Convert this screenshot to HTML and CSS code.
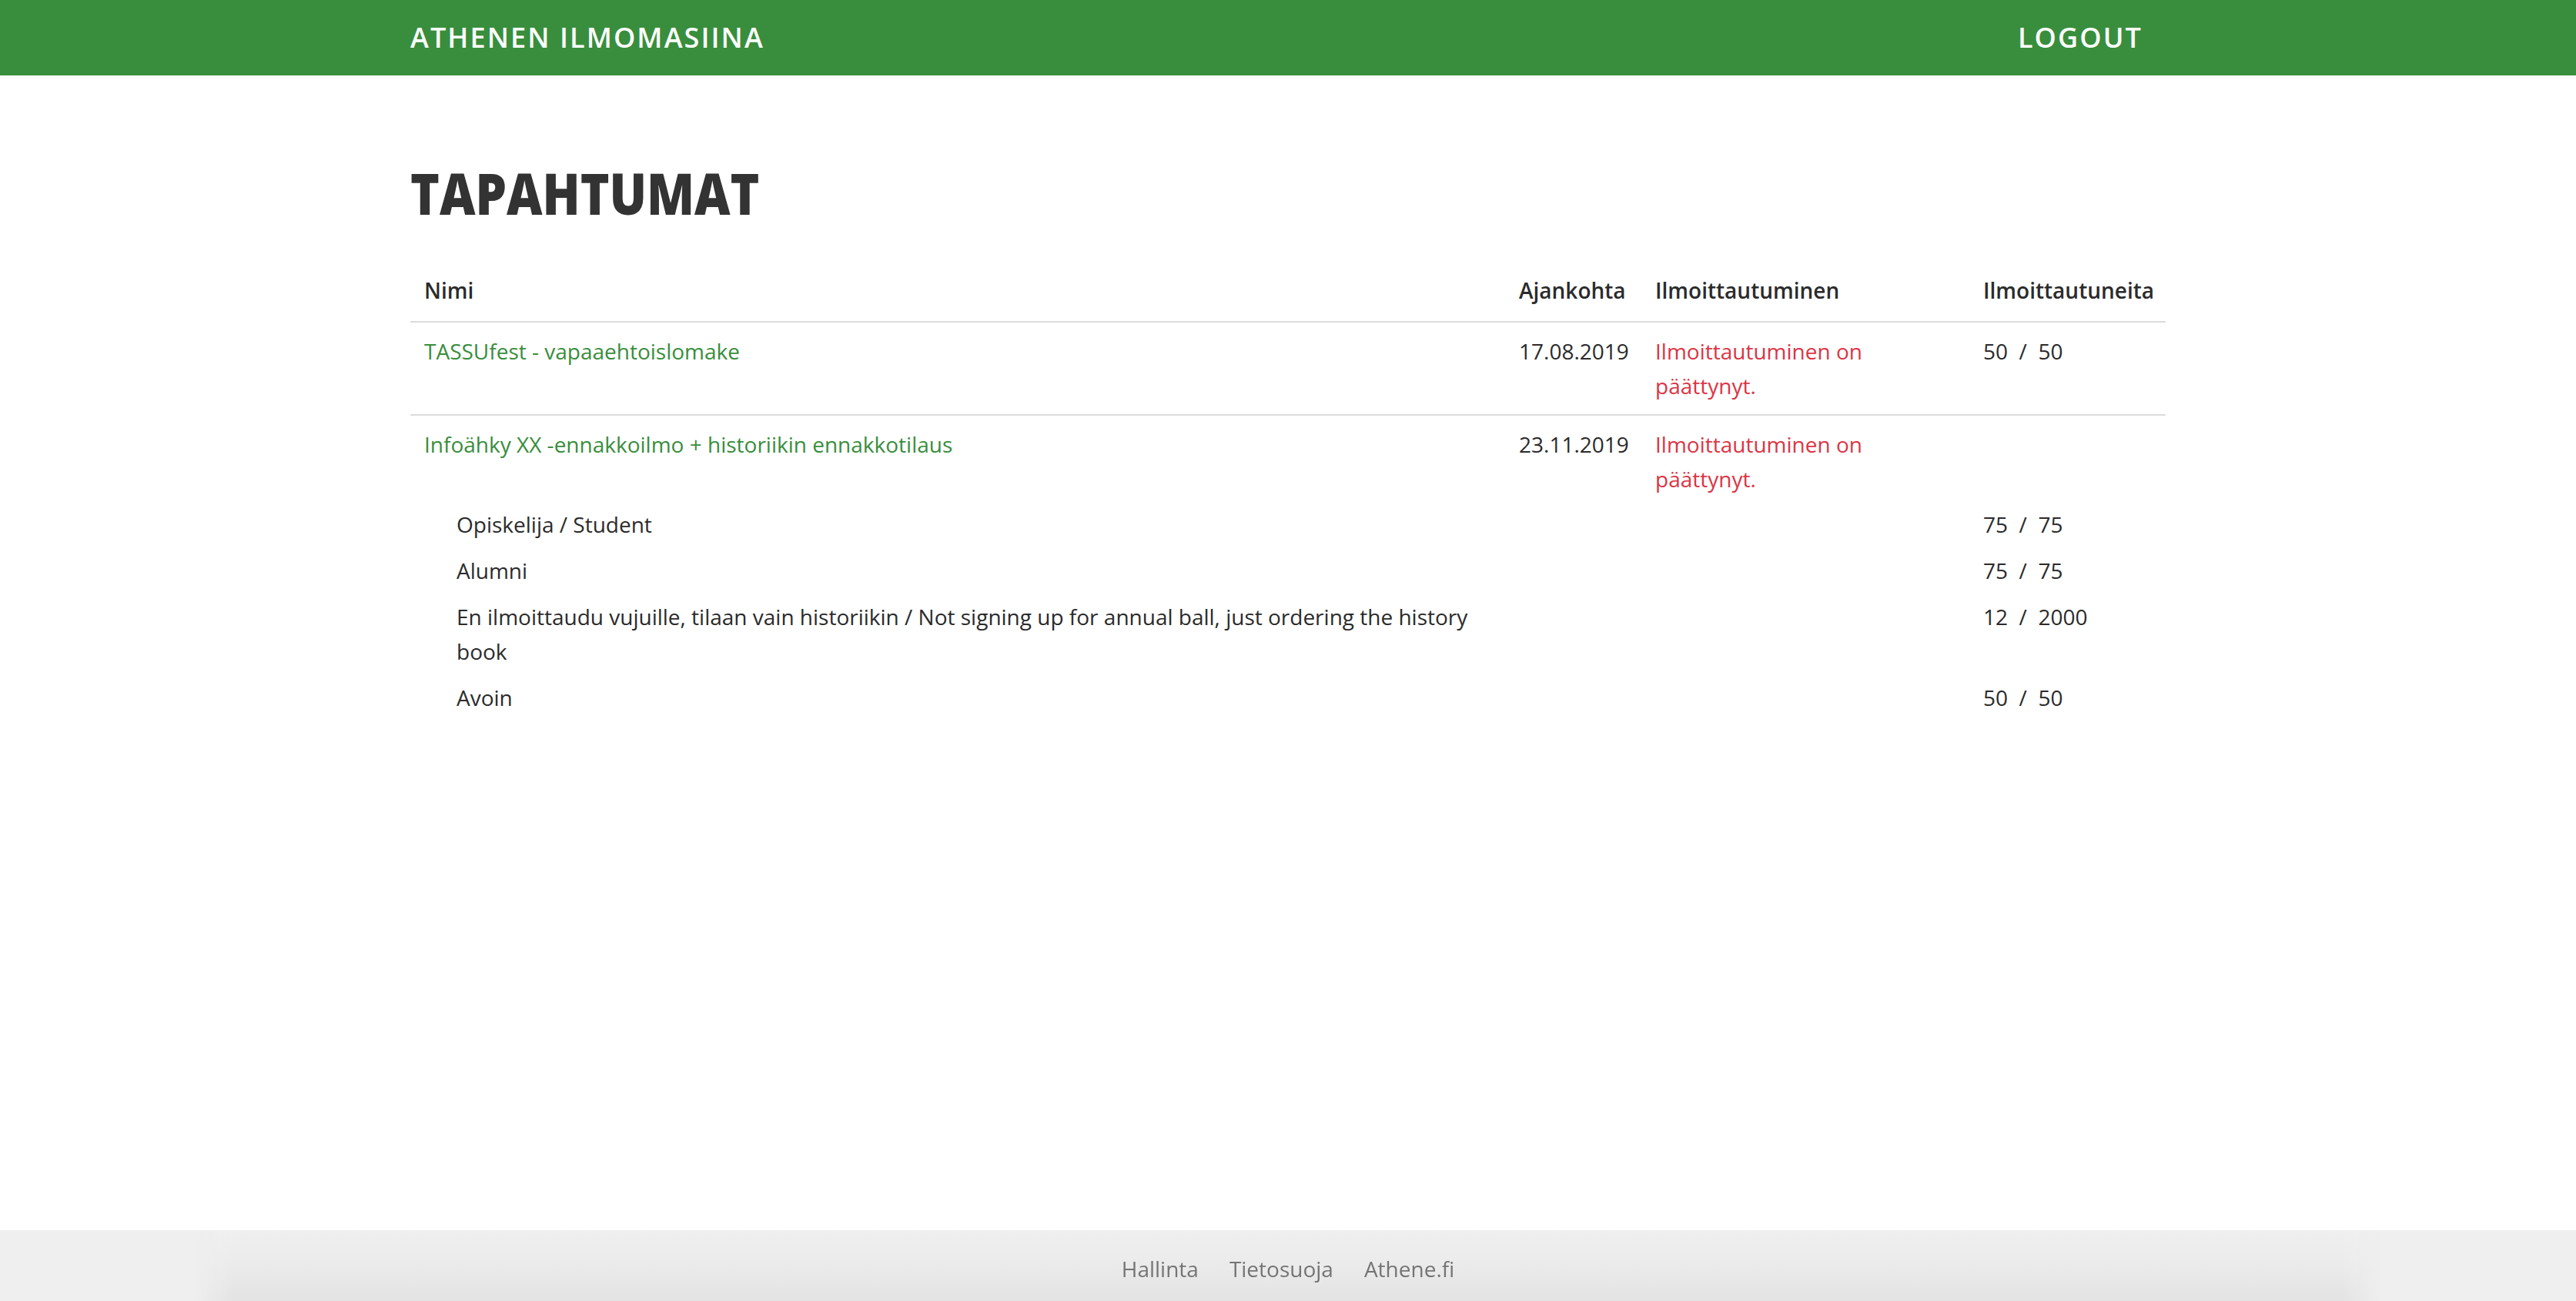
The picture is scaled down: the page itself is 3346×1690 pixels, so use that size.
FILE: index.html
```html
<!DOCTYPE html>
<html lang="fi">
<head>
<meta charset="utf-8">
<title>Athenen ilmomasiina</title>
<link rel="stylesheet" href="styles.css">
</head>
<body class="page">
<header class="navbar">
  <div class="container nav-inner">
    <a class="brand" href="#">Athenen ilmomasiina</a>
    <a class="logout" href="#">Logout</a>
  </div>
</header>
<main class="container content">
  <h1 class="title"><span class="title-text">Tapahtumat</span></h1>
  <table class="events">
    <colgroup>
      <col class="col-name">
      <col class="col-date">
      <col class="col-status">
      <col class="col-count">
    </colgroup>
    <thead>
      <tr>
        <th>Nimi</th>
        <th>Ajankohta</th>
        <th>Ilmoittautuminen</th>
        <th>Ilmoittautuneita</th>
      </tr>
    </thead>
    <tbody>
      <tr class="event-row">
        <td><a class="event-link" href="#">TASSUfest - vapaaehtoislomake</a></td>
        <td>17.08.2019</td>
        <td class="closed">Ilmoittautuminen on päättynyt.</td>
        <td>50&nbsp; / &nbsp;50</td>
      </tr>
      <tr class="event-row event-row--parent">
        <td><a class="event-link" href="#">Infoähky XX -ennakkoilmo + historiikin ennakkotilaus</a></td>
        <td>23.11.2019</td>
        <td class="closed">Ilmoittautuminen on päättynyt.</td>
        <td></td>
      </tr>
      <tr class="quota-row">
        <td class="quota-name">Opiskelija / Student</td>
        <td></td>
        <td></td>
        <td>75&nbsp; / &nbsp;75</td>
      </tr>
      <tr class="quota-row">
        <td class="quota-name">Alumni</td>
        <td></td>
        <td></td>
        <td>75&nbsp; / &nbsp;75</td>
      </tr>
      <tr class="quota-row">
        <td class="quota-name">En ilmoittaudu vujuille, tilaan vain historiikin / Not signing up for annual ball, just ordering the history book</td>
        <td></td>
        <td></td>
        <td>12&nbsp; / &nbsp;2000</td>
      </tr>
      <tr class="quota-row">
        <td class="quota-name">Avoin</td>
        <td></td>
        <td></td>
        <td>50&nbsp; / &nbsp;50</td>
      </tr>
    </tbody>
  </table>
</main>
<footer class="footer">
  <div class="footer-shade">
    <a class="footer-link" href="#">Hallinta</a>
    <a class="footer-link" href="#">Tietosuoja</a>
    <a class="footer-link" href="#">Athene.fi</a>
  </div>
</footer>
</body>
</html>
```

FILE: styles.css
```css
html, body {
  margin: 0;
  padding: 0;
}

.page {
  font-family: "Open Sans", "Noto Sans", sans-serif;
  font-size: 28px;
  line-height: 1.6;
  color: #2b2b2b;
  background: #fff;
  min-height: 100vh;
  display: flex;
  flex-direction: column;
}

.container {
  width: 2280px;
  margin: 0 auto;
  box-sizing: border-box;
}

.navbar {
  background: #388e3c;
  height: 98px;
}

.nav-inner {
  height: 100%;
  display: flex;
  align-items: center;
  justify-content: space-between;
}

.brand,
.logout {
  color: #fff;
  text-decoration: none;
  text-transform: uppercase;
  font-weight: 600;
  font-size: 36px;
  letter-spacing: 2.1px;
  line-height: 1;
}

.logout {
  padding-right: 30px;
}

.content {
  flex: 1;
  padding-top: 107px;
}

.title {
  margin: 0 0 45px;
  font-size: 75px;
  line-height: 90px;
  font-weight: 800;
  text-transform: uppercase;
  color: #333;
}

.title-text {
  display: inline-block;
  transform: scaleX(0.855);
  transform-origin: left center;
}

.events {
  width: 100%;
  border-collapse: collapse;
  table-layout: fixed;
}

.col-date { width: 177px; }
.col-status { width: 426px; }
.col-count { width: 255px; }

.events th {
  text-align: left;
  font-weight: 600;
  padding: 15px 18px 17px;
  border-bottom: 2px solid #dcdcdc;
  vertical-align: bottom;
  white-space: nowrap;
}

.events td {
  padding: 15px 18px;
  vertical-align: top;
}

.event-row td {
  border-top: 2px solid #dcdcdc;
}

.events tbody tr:first-child td {
  border-top: 0;
}

.event-row--parent td {
  padding-bottom: 7px;
}

.quota-row td {
  padding-top: 7.5px;
  padding-bottom: 7.5px;
}

.quota-row td.quota-name {
  padding-left: 60px;
}

.event-link {
  color: #388e3c;
  text-decoration: none;
}

.closed {
  color: #dc3545;
}

.footer {
  height: 92px;
  background: #efefef;
  overflow: hidden;
}

.footer-shade {
  width: 2840px;
  height: 100%;
  margin: 0 auto;
  box-sizing: border-box;
  padding-top: 28px;
  display: flex;
  justify-content: center;
  background: linear-gradient(to bottom, #efefef 0%, #ececec 40%, #e3e3e3 100%);
  -webkit-mask-image: linear-gradient(to right, transparent 0, #000 50px, #000 calc(100% - 50px), transparent 100%);
  mask-image: linear-gradient(to right, transparent 0, #000 50px, #000 calc(100% - 50px), transparent 100%);
}

.footer-link {
  color: #757575;
  text-decoration: none;
  padding: 0 20px;
  line-height: 45px;
  height: 45px;
}
```
